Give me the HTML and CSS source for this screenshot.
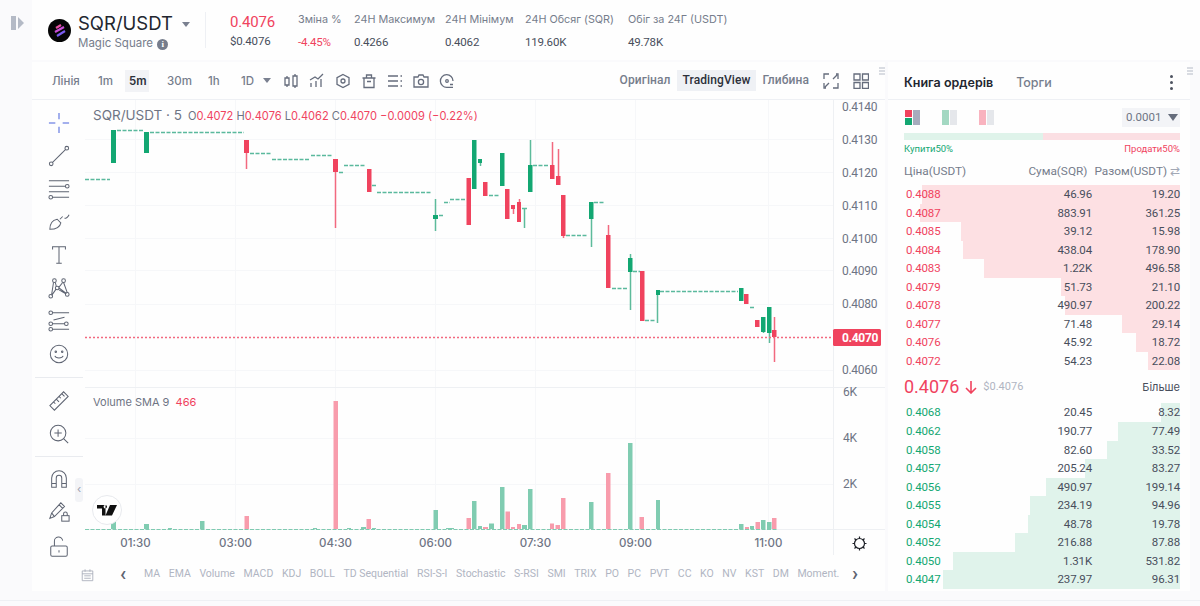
FILE: index.html
```html
<!DOCTYPE html>
<html lang="uk">
<head>
    <meta charset="UTF-8">
    <meta name="viewport" content="width=device-width, initial-scale=1.0">
    <title>SQR/USDT</title>
    <link rel="stylesheet" href="styles.css">
</head>
<body>
    <aside class="rail">
        <svg class="rail-toggle" width="14" height="16" viewBox="0 0 14 16"><rect x="0" y="1" width="5" height="14" fill="#b4bac6"/><path d="M7 2l6 6-6 6z" fill="#b4bac6"/></svg>
    </aside>

    <div class="main">
        <header class="ticker">
            <div class="pair">
                <svg class="pair-logo" width="23" height="23" viewBox="0 0 23 23">
                    <circle cx="11.5" cy="11.5" r="11.5" fill="#050505"/>
                    <path d="M8 9l5-3" stroke="#e5509f" stroke-width="2.2" fill="none"/>
                    <path d="M7 13l9-5" stroke="#c94fd8" stroke-width="2.2" fill="none"/>
                    <path d="M9 17l8-5" stroke="#7a5cf0" stroke-width="2.2" fill="none"/>
                </svg>
                <div>
                    <div class="pair-name">SQR/USDT <i class="caret"></i></div>
                    <div class="pair-sub">Magic Square <span class="info">i</span></div>
                </div>
            </div>
            <div class="last">
                <div class="last-price">0.4076</div>
                <div class="num">$0.4076</div>
            </div>
            <div class="stat stat-change"><span>Зміна %</span><b class="down">-4.45%</b></div>
            <div class="stat stat-high"><span>24Н Максимум</span><b>0.4266</b></div>
            <div class="stat stat-low"><span>24Н Мінімум</span><b>0.4062</b></div>
            <div class="stat stat-vol"><span>24Н Обсяг (SQR)</span><b>119.60K</b></div>
            <div class="stat"><span>Обіг за 24Г (USDT)</span><b>49.78K</b></div>
        </header>

        <div class="work">
            <section class="chart-panel">
                <div class="toolbar">
                    <span class="tf tf-line">Лінія</span>
                    <span class="tf tf-1m">1m</span>
                    <span class="tf tf-5m active">5m</span>
                    <span class="tf tf-30m">30m</span>
                    <span class="tf tf-1h">1h</span>
                    <span class="tf tf-1d">1D <i class="caret small"></i></span>
                    <div class="tool-icons">
                        <svg viewBox="0 0 16 16"><path d="M2 5h4v7H2zM10 3h4v10h-4zM4 3v2M4 12v2M12 1v2M12 13v2"/></svg>
                        <svg viewBox="0 0 16 16"><path d="M2 14v-4M7 14V8M12 14V6M1 7l5-3 3 2 5-5"/></svg>
                        <svg viewBox="0 0 16 16"><path d="M8 1.5l6 3.2v6.6l-6 3.2-6-3.2V4.700z"/><circle cx="8" cy="8" r="2"/></svg>
                        <svg viewBox="0 0 16 16"><path d="M1.500 5h13M3 5v9.500h10V5M5.500 5V2h5v3M6 8.500h4"/></svg>
                        <svg viewBox="0 0 16 16"><path d="M1 3h10M1 8h10M1 13h10M13.500 3h1.500M13.500 8h1.500M13.500 13h1.500"/></svg>
                        <svg viewBox="0 0 16 16"><path d="M1 4h4l1-2h4l1 2h4v10H1z"/><circle cx="8" cy="9" r="2.600"/></svg>
                        <svg viewBox="0 0 16 16"><path d="M14 8A6.300 6.300 0 1 0 8 14.300h6M11 11.500h3"/><circle cx="8" cy="8" r="1.300"/></svg>
                    </div>
                    <div class="views">
                        <span>Оригінал</span>
                        <span class="active">TradingView</span>
                        <span>Глибина</span>
                    </div>
                    <svg class="view-icon" viewBox="0 0 16 16"><path d="M1 6V1h5M15 10v5h-5M1 10v5h2M15 6V1h-2M6 10l-4 4M10 6l4-4"/></svg>
                    <svg class="view-icon grid-icon" viewBox="0 0 16 16"><path d="M1 1h6v6H1zM9.500 1h6v6h-6zM1 9.500h6v6H1zM9.500 9.500h6v6h-6z"/></svg>
                    <svg class="grip" width="6" height="8" viewBox="0 0 6 8"><path d="M0 1h6M0 4h6M0 7h6"/></svg>
                </div>

                <div class="chart-body">
                    <div class="draw-tools">
                        <svg viewBox="0 0 24 24" class="blue"><path d="M12 1v7M12 16v7M1 12h7M16 12h7"/></svg>
                        <svg viewBox="0 0 24 24"><circle cx="3.500" cy="20.500" r="2"/><circle cx="20.500" cy="3.500" r="2"/><path d="M5 19L19 5"/></svg>
                        <svg viewBox="0 0 24 24"><path d="M1 3h22M1 9h18M1 15h22M5 21h18"/><circle cx="21" cy="9" r="2"/><circle cx="3" cy="21" r="2"/></svg>
                        <svg viewBox="0 0 24 24"><path d="M2 20c0-6 3-10 8-11l4 4c-1 5-6 7-12 7zM13 9l3-3M18 8c2 0 4-2 5-4"/></svg>
                        <svg viewBox="0 0 24 24"><path d="M5 6V3h14v3M12 3v18M9 21h6"/></svg>
                        <svg viewBox="0 0 24 24"><circle cx="3" cy="21" r="2"/><circle cx="7" cy="4" r="2"/><circle cx="17" cy="4" r="2"/><circle cx="21" cy="19" r="2"/><circle cx="10" cy="12" r="2"/><path d="M4 19l2-13M8 6l1 4M12 12l8 6M16 6l-4 5M4 20l5-7M17 6l4 11M12 14l7 4"/></svg>
                        <svg viewBox="0 0 24 24"><circle cx="3" cy="3" r="2"/><circle cx="3" cy="15" r="2"/><circle cx="3" cy="21" r="2"/><circle cx="20" cy="15" r="2"/><path d="M5 3h18M5 15h13M5 21h18M6 11l12-3" /></svg>
                        <svg viewBox="0 0 24 24"><circle cx="12" cy="12" r="9.500"/><path d="M7.500 14c1 3 8 3 9 0"/><circle cx="8.500" cy="9.500" r=".8"/><circle cx="15.500" cy="9.500" r=".8"/></svg>
                        <hr class="hr-first">
                        <svg viewBox="0 0 24 24"><path d="M2 17L17 2l5 5L7 22zM6 13l2 2M9 10l3 3M12 7l2 2M15 4l3 3"/></svg>
                        <svg viewBox="0 0 24 24"><circle cx="11" cy="11" r="8.500"/><path d="M11 7v8M7 11h8M17 17l5 5"/></svg>
                        <hr>
                        <svg viewBox="0 0 24 24"><path d="M4 21V11a8 8 0 0 1 16 0v10h-5V11a3 3 0 0 0-6 0v10zM4 17h5M15 17h5"/></svg>
                        <svg viewBox="0 0 24 24"><path d="M2 19l2-6L14 2l4 4L7 17zM4 13l3 4M12 4l4 4"/><rect x="15" y="16" width="8" height="6"/><path d="M17 16v-2a2 2 0 0 1 4 0v2"/></svg>
                        <svg class="lock" viewBox="0 0 24 24"><rect x="3" y="11" width="18" height="11" rx="1.500"/><path d="M7 11V6a4.500 4.500 0 0 1 9-1M12 15.500v2.500"/></svg>
                        <span class="handle">‹</span>
                    </div>

                    <div class="plot">
                        <svg class="plot-svg" viewBox="85 100 800 455" width="800" height="455">
                            <path class="grid" d="M85 139.500h748M85 172.500h748M85 205.500h748M85 238.500h748M85 270.500h748M85 304.500h748M85 370.500h748M85 438.500h748M85 484.500h748M135.500 100v429M235.500 100v429M335.500 100v429M435.500 100v429M535.500 100v429M635.500 100v429M768.500 100v429"/>
                            <path class="frame" d="M833.500 100v455M85 387.500h800M85 529.500h800"/>

                            <path class="flat" d="M85 179.500h25M117 130.500h27M150 132.500h94M250 153.500h21M272 159.500h38M311 155.500h21M339 172.500h4M344 165.500h22M372 185.500h4M377 192.500h55M439 215.500h4M444 202.500h6M450 199.500h16M489 195.500h10M533 165.500h16M566 235.500h22M594 202.500h10M612 288.500h15M633 271.500h7M645 320.500h10M660 291.500h78M750 307.500h5"/>

                            <path class="wick-up" d="M435.500 199v32M480.500 163v3M524.500 208v20M522 208.500h5M530.500 140v25M591.500 219v28M630.500 254v56M657.500 295v28M763.500 331v2M769.500 333v10"/>
                            <path class="wick-down" d="M246.500 153v16M335.500 172v56M513.500 209v5M519.500 199v3M552.500 142v23M558.500 149v27M563.500 236v2M608.500 225v10M774.500 317v45"/>
                            <path class="candle-up" d="M111 130h5v33h-5zM144 132h5v21h-5zM433 215h5v4h-5zM472 140h4.500v49H472zM478 159h4v4h-4zM500 153h4.500v33H500zM528 165h4.500v27H528zM589 202h4.500v17H589zM628 258h4.500v14H628zM656 290h4v5h-4zM739 288h4.500v13H739zM761 317h4.500v15H761zM767 307h4.500v26H767z"/>
                            <path class="candle-down" d="M244 140h5v13h-5zM333 159h5v13h-5zM367 169h4.500v23H367zM466.500 178h4.500v47h-4.500zM483 182h4.500v14H483zM505 189h4.500v30H505zM511 205h4v4h-4zM517 202h4v20h-4zM550 165h4.500v14H550zM556 176h4.500v9H556zM561 195h4.500v41H561zM606 235h4.500v53H606zM640 271h4.500v50H640zM744 294h4.500v10H744zM755 320h4.500v7H755zM772 330h4.500v7H772z"/>
                            <path class="last-line" d="M85 337.500h748"/>

                            <path class="vol-base" d="M85 529.500h692"/>
                            <path class="vol-up" d="M111 522h5v7h-5zM144 524h5v5h-5zM168 528h4v1h-4zM200 521h4.500v8H200zM313 528h4v1h-4zM347 528h4v1h-4zM361 527h5v2h-5zM372 528h4v1h-4zM433.500 510h4.500v19h-4.500zM446 528h4v1h-4zM450 528h4v1h-4zM472 501h4.500v28H472zM478 526h4v3h-4zM489 523.500h5v5.500h-5zM500 487h4.500v42H500zM522 525h5v4h-5zM528 489h4.500v40H528zM589 502h4.500v27H589zM628 443h4.500v86H628zM656 500h4v29h-4zM739 524h4.500v5H739zM750 526h4v3h-4zM761 520h4.500v9H761zM767 522h4.500v7H767z"/>
                            <path class="vol-down" d="M244.500 516h4.500v13h-4.500zM333.500 401h4.500v128h-4.500zM366.500 519h4.500v10h-4.500zM466.500 518h4.500v11h-4.500zM483 527h5v2h-5zM505.500 511.500h4.500V529h-4.500zM511 527h4v2h-4zM517 524h4v5h-4zM550 523.500h4v5.500h-4zM555.500 525h4.500v4h-4.500zM561 498h4.500v31H561zM606 473h4.500v56H606zM639.500 517h4.500v12h-4.500zM745 527h4v2h-4zM755.500 522h4.500v7h-4.500zM772 518h4.500v11H772z"/>

                            <g class="axis-text">
                                <text x="842" y="111">0.4140</text>
                                <text x="842" y="144">0.4130</text>
                                <text x="842" y="177">0.4120</text>
                                <text x="842" y="210">0.4110</text>
                                <text x="842" y="243">0.4100</text>
                                <text x="842" y="275">0.4090</text>
                                <text x="842" y="308">0.4080</text>
                                <text x="842" y="374">0.4060</text>
                                <text x="843" y="396">6K</text>
                                <text x="843" y="442">4K</text>
                                <text x="843" y="488">2K</text>
                            </g>
                            <g class="time-text">
                                <text x="135.500" y="547">01:30</text>
                                <text x="235.500" y="547">03:00</text>
                                <text x="335.500" y="547">04:30</text>
                                <text x="435.500" y="547">06:00</text>
                                <text x="535.500" y="547">07:30</text>
                                <text x="635.500" y="547">09:00</text>
                                <text x="768.500" y="547">11:00</text>
                            </g>
                            <rect class="last-tag" x="833" y="329" width="48" height="17" rx="1.500"/>
                            <text class="last-tag-text" x="842" y="342">0.4070</text>
                            <g class="sun">
                                <circle cx="859.500" cy="543.500" r="5"/>
                                <path d="M859.500 536.500v2M859.500 548.500v2M852.500 543.500h2M864.500 543.500h2M854.500 538.500l1.500 1.500M863 547l1.500 1.500M854.500 548.500l1.500-1.500M863 540l1.500-1.500"/>
                            </g>
                        </svg>

                        <div class="legend">
                            <span class="legend-pair">SQR/USDT · 5</span>
                            <span class="legend-vals"><i>O</i>0.4072 <i>H</i>0.4076 <i>L</i>0.4062 <i>C</i>0.4070 −0.0009 (−0.22%)</span>
                        </div>
                        <div class="legend-vol">Volume SMA 9 <span>466</span></div>
                        <div class="tv-badge">
                            <svg width="20" height="11" viewBox="0 0 20 11"><path d="M0 0h8.500v10.500H5V3.500H0zM13 0h7l-5 10.500H8.500zM10 1.700a1.700 1.700 0 1 0 0 .01z" fill="#111"/></svg>
                        </div>
                    </div>
                </div>

                <div class="indicators">
                    <svg class="cal" viewBox="0 0 16 16"><path d="M1.500 3h13v12h-13zM1.500 6.500h13M5 1v3M11 1v3M4 9h8M4 12h8"/></svg>
                    <span class="chev">‹</span>
                    <div class="ind-list">
                        <span>MA</span><span>EMA</span><span>Volume</span><span>MACD</span><span>KDJ</span><span>BOLL</span><span>TD Sequential</span><span>RSI-S-I</span><span>Stochastic</span><span>S-RSI</span><span>SMI</span><span>TRIX</span><span>PO</span><span>PC</span><span>PVT</span><span>CC</span><span>KO</span><span>NV</span><span>KST</span><span>DM</span><span>Moment.</span>
                    </div>
                    <span class="chev">›</span>
                </div>
            </section>

            <section class="book">
                <div class="book-tabs">
                    <span class="tab active">Книга ордерів</span>
                    <span class="tab">Торги</span>
                    <span class="kebab"><i></i><i></i><i></i></span>
                    <svg class="grip" width="6" height="8" viewBox="0 0 6 8"><path d="M0 1h6M0 4h6M0 7h6"/></svg>
                </div>
                <div class="book-inner">
                    <div class="book-opts">
                        <span class="mode"><i class="m-split"><u></u><u></u></i><i class="m-bar"></i></span>
                        <span class="mode"><i class="m-green"></i><i class="m-pale"></i></span>
                        <span class="mode"><i class="m-pink"></i><i class="m-pale"></i></span>
                        <span class="step">0.0001 <i class="caret dark"></i></span>
                    </div>
                    <div class="ratio"><span></span></div>
                    <div class="ratio-labels"><span class="up">Купити50%</span><span class="down">Продати50%</span></div>
                    <div class="head"><span>Ціна(USDT)</span><span>Сума(SQR)</span><span>Разом(USDT) <em>⇄</em></span></div>

                    <div class="rows sell">
                        <div class="row"><i style="width:93.5%"></i><span>0.4088</span><span>46.96</span><span>19.20</span></div>
                        <div class="row"><i style="width:94.2%"></i><span>0.4087</span><span>883.91</span><span>361.25</span></div>
                        <div class="row"><i style="width:79.3%"></i><span>0.4085</span><span>39.12</span><span>15.98</span></div>
                        <div class="row"><i style="width:78.8%"></i><span>0.4084</span><span>438.04</span><span>178.90</span></div>
                        <div class="row"><i style="width:71%"></i><span>0.4083</span><span>1.22K</span><span>496.58</span></div>
                        <div class="row"><i style="width:43%"></i><span>0.4079</span><span>51.73</span><span>21.10</span></div>
                        <div class="row"><i style="width:41.7%"></i><span>0.4078</span><span>490.97</span><span>200.22</span></div>
                        <div class="row"><i style="width:21%"></i><span>0.4077</span><span>71.48</span><span>29.14</span></div>
                        <div class="row"><i style="width:16%"></i><span>0.4076</span><span>45.92</span><span>18.72</span></div>
                        <div class="row"><i style="width:11.6%"></i><span>0.4072</span><span>54.23</span><span>22.08</span></div>
                    </div>

                    <div class="mid">
                        <span class="mid-price">0.4076</span>
                        <svg width="12" height="14" viewBox="0 0 12 14"><path d="M6 1v12M1 8l5 5 5-5" fill="none" stroke="#f0435e" stroke-width="1.600"/></svg>
                        <span class="mid-usd">$0.4076</span>
                        <span class="more">Більше</span>
                    </div>

                    <div class="rows buy">
                        <div class="row"><i style="width:6.9%"></i><span>0.4068</span><span>20.45</span><span>8.32</span></div>
                        <div class="row"><i style="width:22.5%"></i><span>0.4062</span><span>190.77</span><span>77.49</span></div>
                        <div class="row"><i style="width:26.4%"></i><span>0.4058</span><span>82.60</span><span>33.52</span></div>
                        <div class="row"><i style="width:34.4%"></i><span>0.4057</span><span>205.24</span><span>83.27</span></div>
                        <div class="row"><i style="width:48.6%"></i><span>0.4056</span><span>490.97</span><span>199.14</span></div>
                        <div class="row"><i style="width:54.3%"></i><span>0.4055</span><span>234.19</span><span>94.96</span></div>
                        <div class="row"><i style="width:55%"></i><span>0.4054</span><span>48.78</span><span>19.78</span></div>
                        <div class="row"><i style="width:59.8%"></i><span>0.4052</span><span>216.88</span><span>87.88</span></div>
                        <div class="row"><i style="width:82.2%"></i><span>0.4050</span><span>1.31K</span><span>531.82</span></div>
                        <div class="row"><i style="width:85.9%"></i><span>0.4047</span><span>237.97</span><span>96.31</span></div>
                    </div>
                </div>
            </section>
        </div>
        <div class="foot"></div>
    </div>
</body>
</html>
```
FILE: styles.css
```css
:root {
    --up: #13a772;
    --down: #f0435e;
    --text: #484e5c;
    --muted: #767d8c;
    --faint: #b0b5c2;
    --line: #eef0f4;
    --panel: #fefefe;
}

* {
    margin: 0;
    padding: 0;
    box-sizing: border-box;
}

body {
    display: flex;
    width: 1200px;
    height: 606px;
    overflow: hidden;
    background: #fafafc;
    color: var(--text);
    font-family: Inter, "Noto Sans", sans-serif;
}

i {
    font-style: normal;
}

.rail {
    width: 32px;
    padding: 15px 0 0 11px;
}

.rail-toggle {
    display: block;
}

.main {
    flex: 1;
    min-width: 0;
}

.foot {
    margin: 9px 0 0 -32px;
    border-top: 1px solid var(--line);
}

.grip {
    position: absolute;
    top: 5px;
    right: 0;
    fill: none;
    stroke: #b4bac6;
}

/* ticker */
.ticker {
    display: flex;
    height: 60px;
    padding-left: 16px;
    background: var(--panel);
}

.pair {
    display: flex;
    width: 158px;
    height: 36px;
    margin-top: 12px;
    border-right: 1px solid var(--line);
}

.pair-logo {
    margin: 7px 7px 0 0;
}

.pair-name {
    margin-top: -1px;
    font-size: 18.500px;
    line-height: 24px;
    color: #22262f;
    white-space: nowrap;
}

.caret {
    display: inline-block;
    width: 0;
    height: 0;
    margin-left: 4px;
    border: 4.500px solid transparent;
    border-top: 5.500px solid #7a8090;
    border-bottom: 0;
    vertical-align: 3px;
}

.caret.small {
    margin-left: 6px;
    vertical-align: 2px;
}

.caret.dark {
    margin-left: 4px;
    border-width: 5.500px;
    border-top-width: 7px;
    border-bottom: 0;
    border-top-color: #656c7c;
    vertical-align: 0;
}

.pair-sub {
    margin-top: 1px;
    font-size: 11.500px;
    color: var(--muted);
    white-space: nowrap;
}

.info {
    display: inline-block;
    width: 11px;
    height: 11px;
    margin-left: 1px;
    border-radius: 50%;
    background: #767d8c;
    color: #fff;
    font: bold 9px/11px "Liberation Serif", serif;
    text-align: center;
    vertical-align: 0;
}

.last {
    width: 68px;
    margin: 12px 0 0 24px;
    font-family: Roboto, sans-serif;
}

.last-price {
    font-size: 15px;
    line-height: 20px;
    letter-spacing: -.2px;
    color: var(--down);
}

.num {
    margin-top: 2px;
    font-size: 11.500px;
    letter-spacing: -.2px;
}

.stat {
    display: flex;
    flex-direction: column;
    gap: 8px;
    margin-top: 13px;
    font-size: 10.800px;
    white-space: nowrap;
}

.stat span {
    line-height: 14px;
    color: var(--muted);
}

.stat b {
    font-family: Roboto, sans-serif;
    font-size: 11.500px;
    line-height: 14px;
    font-weight: 400;
    letter-spacing: -.2px;
}

.stat-change { width: 56px; }
.stat-high { width: 91px; }
.stat-low { width: 80px; }
.stat-vol { width: 103px; }

.down { color: var(--down) !important; }
.up { color: var(--up); }

/* chart */
.work {
    display: flex;
    gap: 3px;
    margin-top: 2px;
}

.chart-panel {
    width: 853px;
    height: 529px;
    background: var(--panel);
}

.toolbar {
    position: relative;
    display: flex;
    align-items: center;
    height: 38px;
    padding-left: 20px;
    border-bottom: 1px solid var(--line);
    font-size: 11.500px;
    font-weight: 500;
    color: var(--muted);
}

.tf {
    padding: 4px 0;
    line-height: 14px;
    white-space: nowrap;
}

.tf-line { width: 46px; }
.tf-1m { width: 27px; }
.tf-5m { width: 24px; margin-right: 18px; padding-left: 4px; }
.tf-30m { width: 41px; }
.tf-1h { width: 33px; }
.tf-1d { width: 42px; }

.tf.active {
    background: #f2f3f6;
    color: #2c303a;
    font-weight: 600;
}

.tool-icons {
    display: flex;
    gap: 10px;
}

.tool-icons svg,
.view-icon {
    width: 16px;
    height: 16px;
    fill: none;
    stroke: #656c7c;
    stroke-width: 1.300;
}

.views {
    display: flex;
    align-items: center;
    margin-left: auto;
    margin-right: 8px;
    font-family: Roboto, sans-serif;
    font-size: 12px;
    letter-spacing: .1px;
}

.views span {
    padding: 0 6px;
    line-height: 21px;
    white-space: nowrap;
}

.views .active {
    background: #eff1f5;
    color: #2c303a;
}

.view-icon {
    margin-right: 14px;
}

.grid-icon {
    margin-right: 16px;
}

.chart-body {
    display: flex;
    height: 455px;
}

.draw-tools {
    position: relative;
    display: flex;
    flex-direction: column;
    align-items: center;
    gap: 11px;
    width: 53px;
    padding-top: 12px;
}

.draw-tools svg {
    flex: none;
    width: 22px;
    height: 22px;
    fill: none;
    stroke: #5e6472;
    stroke-width: 1.100;
}

.draw-tools svg.blue {
    stroke: #4a63dc;
}

.draw-tools svg.lock {
    margin-top: 2px;
}

.draw-tools hr {
    flex: none;
    width: 48px;
    border: 0;
    border-top: 1px solid #e9ebef;
}

.draw-tools hr.hr-first {
    margin: 1px 0;
}

.handle {
    position: absolute;
    left: 43px;
    top: 378px;
    width: 8px;
    height: 24px;
    border-radius: 3px;
    background: #f3f4f7;
    color: #9aa0ad;
    font-size: 11px;
    line-height: 22px;
    text-align: center;
}

.plot {
    position: relative;
    width: 800px;
    height: 455px;
}

.plot-svg {
    display: block;
}

.grid {
    fill: none;
    stroke: #f6f7f9;
}

.frame {
    fill: none;
    stroke: #eef0f3;
}

.flat {
    fill: none;
    stroke: #5ab99d;
    stroke-width: 1.500;
    stroke-dasharray: 4 1.500;
}

.wick-up { fill: none; stroke: #5dbb9b; stroke-width: 1.500; }
.wick-down { fill: none; stroke: #f2697f; stroke-width: 1.500; }
.candle-up { fill: var(--up); }
.candle-down { fill: var(--down); }

.last-line {
    fill: none;
    stroke: #f2697f;
    stroke-width: 1.500;
    stroke-dasharray: 2 2;
}

.vol-base {
    fill: none;
    stroke: #7fcbb1;
    stroke-dasharray: 4 1.500;
}

.vol-up { fill: #80ccb1; }
.vol-down { fill: #f89cac; }

.axis-text text {
    font-family: Roboto, sans-serif;
    font-size: 12px;
    letter-spacing: -.3px;
    fill: #6e7484;
}

.time-text text {
    font-family: Inter, sans-serif;
    font-size: 11.500px;
    font-weight: 500;
    text-anchor: middle;
    fill: #6e7484;
}

.last-tag { fill: var(--down); }

.last-tag-text {
    font-family: Roboto, sans-serif;
    font-size: 12px;
    font-weight: 700;
    letter-spacing: -.3px;
    fill: #fff;
}

.sun {
    fill: none;
    stroke: #1c1f26;
    stroke-width: 1.200;
}

.legend {
    position: absolute;
    left: 8px;
    top: 7px;
    display: flex;
    gap: 6px;
    align-items: baseline;
    white-space: nowrap;
}

.legend-pair {
    font-size: 13.500px;
    color: #6e7484;
}

.legend-vals {
    font-size: 11.100px;
    color: var(--down);
}

.legend-vals i {
    color: #6e7484;
}

.legend-vol {
    position: absolute;
    left: 8px;
    top: 295px;
    font-size: 11px;
    color: #6e7484;
}

.legend-vol span {
    margin-left: 3px;
    color: var(--down);
}

.tv-badge {
    position: absolute;
    left: 7px;
    top: 395px;
    display: flex;
    align-items: center;
    justify-content: center;
    width: 30px;
    height: 30px;
    border: 1px solid #e8eaee;
    border-radius: 50%;
    background: #fff;
}

.indicators {
    display: flex;
    align-items: center;
    height: 36px;
    padding-left: 49px;
    font-family: Roboto, sans-serif;
    font-size: 10.500px;
    color: var(--faint);
}

.cal {
    width: 13px;
    height: 14px;
    margin: 3px 26px 0 0;
    fill: none;
    stroke: #a2a8b5;
}

.chev {
    width: 8px;
    font-size: 20px;
    font-weight: 600;
    line-height: 20px;
    color: #5e6472;
}

.ind-list {
    display: flex;
    gap: 8.600px;
    width: 697px;
    margin: 0 11px 0 16px;
    white-space: nowrap;
}

/* order book */
.book {
    width: 302px;
    height: 529px;
    background: var(--panel);
    font-family: Roboto, sans-serif;
}

.book-tabs {
    position: relative;
    display: flex;
    align-items: center;
    gap: 23px;
    height: 38px;
    padding: 4px 0 0 16px;
    border-bottom: 1px solid var(--line);
    font-family: Inter, sans-serif;
    font-size: 12.500px;
    font-weight: 500;
    color: var(--muted);
}

.tab.active {
    font-weight: 600;
    color: #22262f;
}

.kebab {
    display: flex;
    flex-direction: column;
    gap: 3px;
    margin-left: auto;
    margin-right: 17px;
}

.kebab i {
    width: 3px;
    height: 3px;
    border-radius: 50%;
    background: #4d5360;
}

.book-tabs .grip {
    right: -3px;
}

.book-inner {
    margin: 0 10px 0 16px;
}

.book-opts {
    display: flex;
    align-items: center;
    gap: 22px;
    height: 33px;
    padding: 2px 0 0 1px;
}

.mode {
    display: flex;
    gap: 1px;
    width: 15px;
    height: 15px;
}

.mode i {
    flex: 1;
}

.m-split {
    display: flex;
    flex-direction: column;
    gap: 1px;
}

.m-split u {
    flex: 1;
    background: var(--down);
}

.m-split u + u { background: var(--up); }
.m-bar { background: #a7acbd; }
.m-green { background: #a3d8c2; }
.m-pink { background: #f9b3bf; }
.m-pale { background: #e5e7eb; }

.step {
    margin-left: auto;
    width: 58px;
    height: 19px;
    padding-left: 4px;
    background: #f3f4f7;
    font-size: 11.500px;
    line-height: 19px;
    color: #6e7484;
    white-space: nowrap;
}

.ratio {
    height: 7px;
    background: #fbdfe3;
}

.ratio span {
    display: block;
    width: 50.500%;
    height: 100%;
    background: #dff3ea;
}

.ratio-labels {
    display: flex;
    justify-content: space-between;
    margin-top: 2px;
    font-size: 9.500px;
    line-height: 13px;
}

.head {
    display: flex;
    height: 30px;
    padding-top: 7px;
    font-size: 11.800px;
    line-height: 18px;
    color: var(--muted);
    white-space: nowrap;
}

.head span:first-child {
    flex: 1;
}

.head span:nth-child(2) {
    margin-right: 7px;
}

.head em {
    font-style: normal;
    color: #a2a8b5;
}

.row {
    position: relative;
    display: grid;
    grid-template-columns: 1fr 1fr 1fr;
    height: 18.550px;
    font-size: 11.500px;
    line-height: 19px;
    letter-spacing: -.15px;
}

.row span {
    position: relative;
    text-align: right;
}

.row span:first-of-type {
    padding-left: 2px;
    text-align: left;
}

.row span:nth-of-type(2) {
    margin-right: -4px;
}

.row i {
    position: absolute;
    top: 0;
    right: 0;
    bottom: 0;
}

.sell .row span:first-of-type { color: var(--down); }
.sell i { background: #fde0e3; }
.buy .row span:first-of-type { color: var(--up); }
.buy i { background: #e0f3eb; }

.mid {
    display: flex;
    align-items: center;
    height: 33px;
}

.mid-price {
    font-size: 18px;
    color: var(--down);
}

.mid svg {
    margin-left: 6px;
}

.mid-usd {
    margin-left: 6px;
    font-size: 11px;
    color: var(--faint);
}

.more {
    margin-left: auto;
    font-family: Inter, sans-serif;
    font-size: 11px;
}
```
